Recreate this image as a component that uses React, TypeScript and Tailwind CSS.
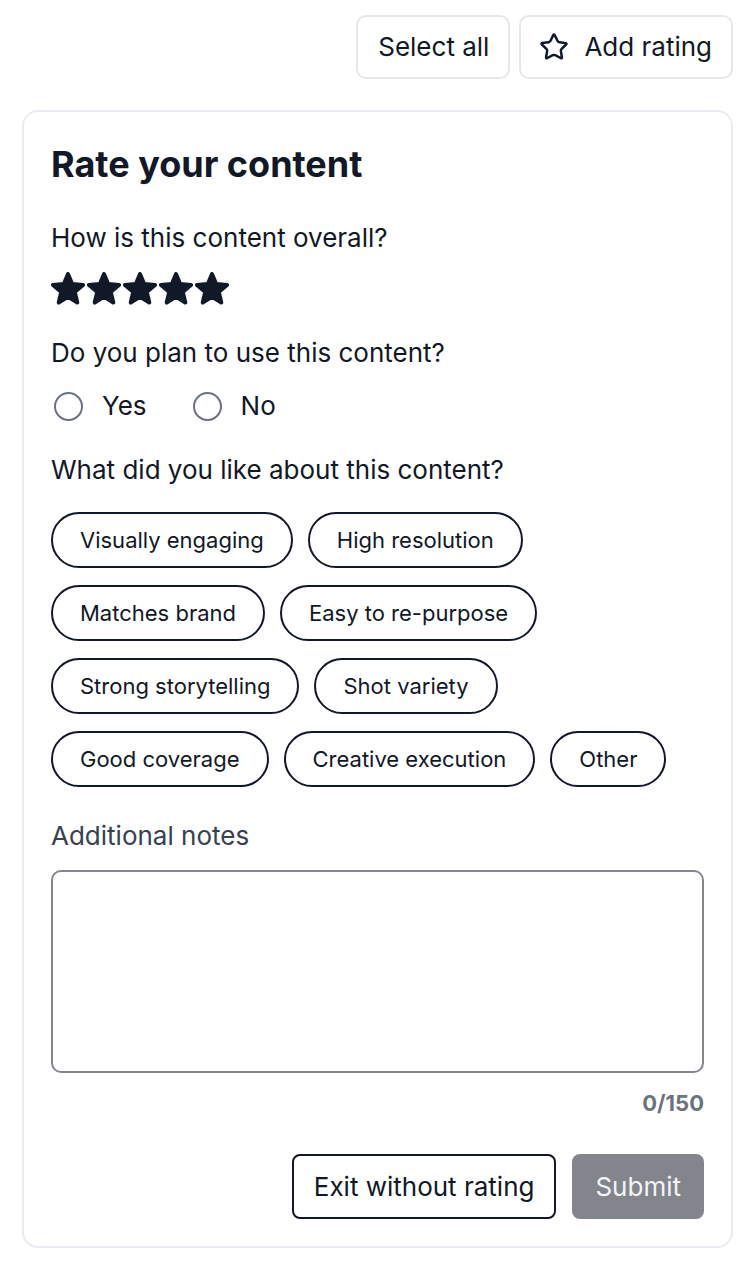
import React from "react";
import { Star } from "lucide-react";

const chips = [
  ["Visually engaging", "High resolution"],
  ["Matches brand", "Easy to re-purpose"],
  ["Strong storytelling", "Shot variety"],
  ["Good coverage", "Creative execution", "Other"],
];

function FilledStar() {
  return (
    <svg width="34" height="33" viewBox="0 0 34 33" className="shrink-0">
      <polygon
        points="17,2 21.17,12.06 32.03,12.92 23.75,19.99 26.29,30.58 17,24.9 7.71,30.58 10.25,19.99 1.97,12.92 12.83,12.06"
        fill="#111827"
        stroke="#111827"
        strokeWidth="4"
        strokeLinejoin="round"
      />
    </svg>
  );
}

export default function App() {
  return (
    <div
      className="w-[748px] min-h-[1268px] bg-white text-[#111827]"
      style={{ fontFamily: "Inter, 'Noto Sans', sans-serif" }}
    >
      <div className="flex justify-end gap-[9px] pt-[15px] pr-[15px]">
        <button className="h-[64px] pl-[20px] pr-[19px] rounded-[10px] border-2 border-[#e5e7eb] text-[26px] leading-[32px]">
          Select all
        </button>
        <button className="h-[64px] pl-[18px] pr-[19px] rounded-[10px] border-2 border-[#e5e7eb] text-[26px] leading-[32px] flex items-center gap-[15px]">
          <Star size={30} strokeWidth={2} />
          Add rating
        </button>
      </div>

      <div className="ml-[22px] mr-[15px] mt-[31px] border-2 border-[#e9ebf0] rounded-[16px] px-[27px] pt-[30px] pb-[27px]">
        <h1 className="text-[36px] font-bold leading-[44px]">Rate your content</h1>

        <p className="mt-[36px] text-[26px] leading-[32px]">How is this content overall?</p>
        <div className="flex mt-[18px] gap-[2px]">
          {[0, 1, 2, 3, 4].map((i) => (
            <FilledStar key={i} />
          ))}
        </div>

        <p className="mt-[32px] text-[26px] leading-[32px]">Do you plan to use this content?</p>
        <div className="flex items-center mt-[21px] gap-[46px]">
          <label className="flex items-center gap-[19px]">
            <span className="ml-[3px] w-[29px] h-[29px] rounded-full border-2 border-[#6b7280]" />
            <span className="text-[26px] leading-[32px]">Yes</span>
          </label>
          <label className="flex items-center gap-[19px]">
            <span className="w-[29px] h-[29px] rounded-full border-2 border-[#6b7280]" />
            <span className="text-[26px] leading-[32px]">No</span>
          </label>
        </div>

        <p className="mt-[32px] text-[26px] leading-[32px]">What did you like about this content?</p>
        <div className="mt-[26px] flex flex-col gap-[17px]">
          {chips.map((row, ri) => (
            <div key={ri} className="flex gap-[15px]">
              {row.map((c) => (
                <span
                  key={c}
                  className="h-[56px] px-[27px] rounded-full border-2 border-[#111827] text-[22px] flex items-center"
                >
                  {c}
                </span>
              ))}
            </div>
          ))}
        </div>

        <p className="mt-[33px] text-[26px] leading-[32px] text-[#374151]">Additional notes</p>
        <textarea className="mt-[18px] block w-full h-[203px] rounded-[10px] border-2 border-[#84878e] resize-none" />
        <div className="mt-[16px] text-right text-[22px] font-bold text-[#6b7280] leading-[28px]">0/150</div>

        <div className="mt-[37px] flex justify-end gap-[16px]">
          <button className="h-[65px] px-[20px] rounded-[8px] border-2 border-[#111827] text-[26px] leading-[32px]">
            Exit without rating
          </button>
          <button className="h-[65px] px-[23px] rounded-[8px] bg-[#82858c] text-[#f3f4f6] text-[26px] leading-[32px]">
            Submit
          </button>
        </div>
      </div>
    </div>
  );
}
